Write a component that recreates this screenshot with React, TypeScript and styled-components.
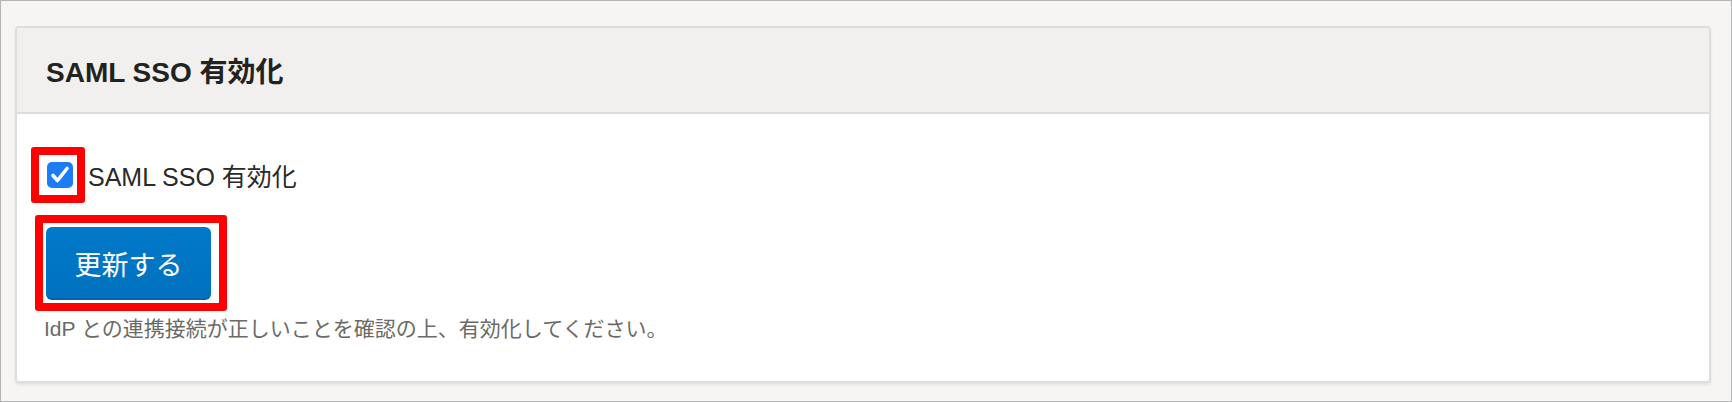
import styled, { createGlobalStyle } from 'styled-components';

const GlobalStyle = createGlobalStyle`
  html, body {
    margin: 0;
    padding: 0;
    background: #f6f5f3;
  }
  body {
    font-family: "Liberation Sans", "Noto Sans CJK JP", sans-serif;
  }
`;

const Frame = styled.div`
  box-sizing: border-box;
  width: 1732px;
  height: 402px;
  border: 1px solid #b4b4b4;
  background: #f6f5f3;
  padding: 25px 20px 0 14px;
`;

const Card = styled.section`
  box-sizing: border-box;
  height: 357px;
  background: #fff;
  border: 2px solid #dedddb;
  border-radius: 4px;
  box-shadow: 0 2px 3px rgba(0, 0, 0, 0.08);
  overflow: hidden;
`;

const CardHeader = styled.header`
  height: 84px;
  display: flex;
  align-items: center;
  padding: 0 29px;
  background: #f1f0ee;
  border-bottom: 2px solid #dedddb;
`;

const Title = styled.h2`
  margin: 0;
  font-size: 28px;
  font-weight: 700;
  color: #222220;
`;

const CardBody = styled.div`
  padding: 33px 15px 0 14px;
  display: flex;
  flex-direction: column;
  align-items: flex-start;
`;

const Mark = styled.div<{ $pad: string }>`
  display: inline-flex;
  border: 8px solid #ff0000;
  border-radius: 3px;
  padding: ${({ $pad }) => $pad};
  background: #fff;
`;

const CheckRow = styled.label`
  display: flex;
  align-items: center;
  cursor: pointer;
`;

const HiddenInput = styled.input`
  display: none;
`;

const Box = styled.span`
  width: 26px;
  height: 26px;
  border-radius: 5px;
  background: #1b7cf6;
  display: flex;
  align-items: center;
  justify-content: center;
`;

const LabelText = styled.span`
  margin-left: 3px;
  font-size: 25px;
  color: #2a2a2a;
`;

const ButtonSlot = styled.div`
  margin: 12px 0 0 4px;
`;

const UpdateButton = styled.button`
  width: 165px;
  height: 73px;
  border: none;
  border-radius: 6px;
  background: linear-gradient(#0079c9, #0072bf);
  box-shadow: inset 0 -2px 0 rgba(0, 0, 0, 0.12);
  color: #fff;
  font-family: "Liberation Sans", "Noto Sans CJK JP", sans-serif;
  font-size: 27px;
  padding: 0;
  cursor: pointer;
`;

const Help = styled.p`
  margin: 3px 0 0 13px;
  font-size: 21px;
  line-height: 30px;
  color: #6b6a67;
`;

export default function App() {
  return (
    <>
      <GlobalStyle />
      <Frame>
        <Card>
          <CardHeader>
            <Title>SAML SSO 有効化</Title>
          </CardHeader>
          <CardBody>
            <CheckRow>
              <Mark $pad="7px 4px 7px 8px">
                <HiddenInput type="checkbox" defaultChecked />
                <Box>
                  <svg width="26" height="26" viewBox="0 0 26 26">
                    <path
                      d="M6 13.5 L10.5 18.5 L20 6.5"
                      fill="none"
                      stroke="#fff"
                      strokeWidth="3.6"
                      strokeLinecap="round"
                      strokeLinejoin="round"
                    />
                  </svg>
                </Box>
              </Mark>
              <LabelText>SAML SSO 有効化</LabelText>
            </CheckRow>
            <ButtonSlot>
              <Mark $pad="4px 8px 3px 3px">
                <UpdateButton>更新する</UpdateButton>
              </Mark>
            </ButtonSlot>
            <Help>IdP との連携接続が正しいことを確認の上、有効化してください。</Help>
          </CardBody>
        </Card>
      </Frame>
    </>
  );
}
